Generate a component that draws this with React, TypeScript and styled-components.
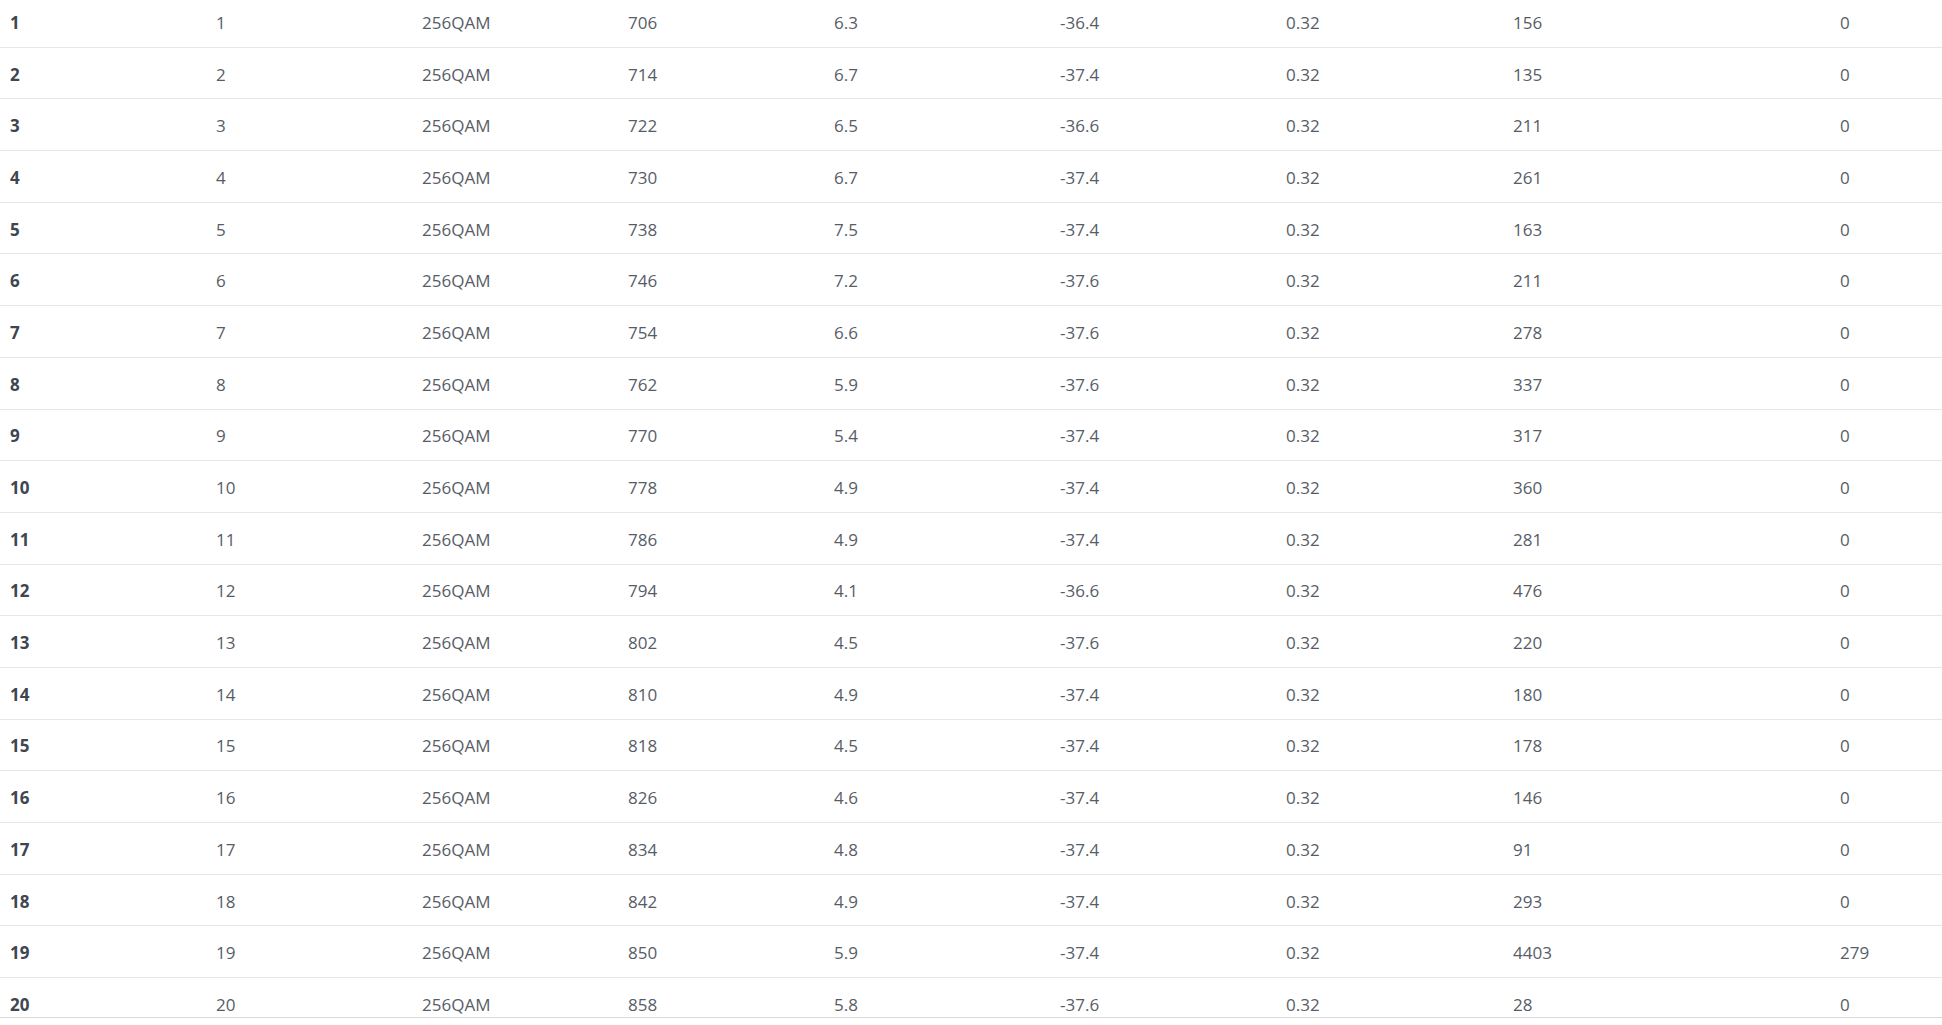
import React, { useLayoutEffect, useRef } from "react";
import styled, { createGlobalStyle } from "styled-components";

const GlobalStyle = createGlobalStyle`
  html, body {
    margin: 0;
    padding: 0;
    background: #ffffff;
  }
  body {
    font-family: "Open Sans", "Noto Sans", Arial, sans-serif;
  }
`;

const Viewport = styled.div`
  height: 1018px;
  box-sizing: border-box;
  border-bottom: 1px solid #d9d9d9;
  overflow: hidden;
  scrollbar-width: none;
  &::-webkit-scrollbar {
    display: none;
  }
`;

const Table = styled.table`
  width: 100%;
  border-collapse: separate;
  border-spacing: 0;
  table-layout: fixed;
`;

const Row = styled.tr`
  height: 51.7px;
`;

const Cell = styled.td<{ $head?: boolean }>`
  box-sizing: border-box;
  padding: 3px 10px 0 10px;
  border-bottom: 1px solid #e6e6e6;
  vertical-align: middle;
  font-size: 17px;
  line-height: 20px;
  white-space: nowrap;
  color: ${(p) => (p.$head ? "#3e4650" : "#575d66")};
  font-weight: ${(p) => (p.$head ? 700 : 400)};
`;

const widths = [206, 206, 206, 206, 226, 226, 227, 327, 112];

type Ch = {
  snr: string;
  power: string;
  corr: number;
  uncorr: number;
};

const channels: Ch[] = [
  { snr: "6.3", power: "-36.4", corr: 156, uncorr: 0 },
  { snr: "6.7", power: "-37.4", corr: 135, uncorr: 0 },
  { snr: "6.5", power: "-36.6", corr: 211, uncorr: 0 },
  { snr: "6.7", power: "-37.4", corr: 261, uncorr: 0 },
  { snr: "7.5", power: "-37.4", corr: 163, uncorr: 0 },
  { snr: "7.2", power: "-37.6", corr: 211, uncorr: 0 },
  { snr: "6.6", power: "-37.6", corr: 278, uncorr: 0 },
  { snr: "5.9", power: "-37.6", corr: 337, uncorr: 0 },
  { snr: "5.4", power: "-37.4", corr: 317, uncorr: 0 },
  { snr: "4.9", power: "-37.4", corr: 360, uncorr: 0 },
  { snr: "4.9", power: "-37.4", corr: 281, uncorr: 0 },
  { snr: "4.1", power: "-36.6", corr: 476, uncorr: 0 },
  { snr: "4.5", power: "-37.6", corr: 220, uncorr: 0 },
  { snr: "4.9", power: "-37.4", corr: 180, uncorr: 0 },
  { snr: "4.5", power: "-37.4", corr: 178, uncorr: 0 },
  { snr: "4.6", power: "-37.4", corr: 146, uncorr: 0 },
  { snr: "4.8", power: "-37.4", corr: 91, uncorr: 0 },
  { snr: "4.9", power: "-37.4", corr: 293, uncorr: 0 },
  { snr: "5.9", power: "-37.4", corr: 4403, uncorr: 279 },
  { snr: "5.8", power: "-37.6", corr: 28, uncorr: 0 },
];

export default function App() {
  const ref = useRef<HTMLDivElement>(null);
  useLayoutEffect(() => {
    if (ref.current) ref.current.scrollTop = 4;
  }, []);
  return (
    <>
      <GlobalStyle />
      <Viewport ref={ref}>
        <Table>
          <colgroup>
            {widths.map((w, i) => (
              <col key={i} style={{ width: w }} />
            ))}
          </colgroup>
          <tbody>
            {channels.map((c, i) => (
              <Row key={i}>
                <Cell $head>{i + 1}</Cell>
                <Cell>{i + 1}</Cell>
                <Cell>256QAM</Cell>
                <Cell>{706 + i * 8}</Cell>
                <Cell>{c.snr}</Cell>
                <Cell>{c.power}</Cell>
                <Cell>0.32</Cell>
                <Cell>{c.corr}</Cell>
                <Cell>{c.uncorr}</Cell>
              </Row>
            ))}
          </tbody>
        </Table>
      </Viewport>
    </>
  );
}
